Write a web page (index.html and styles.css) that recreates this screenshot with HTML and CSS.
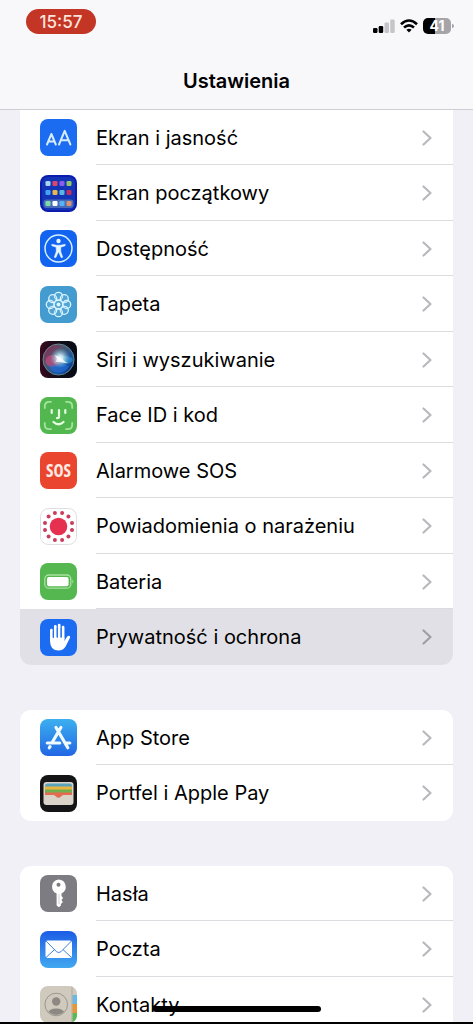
FILE: index.html
```html
<!DOCTYPE html>
<html lang="pl">
<head>
    <meta charset="UTF-8">
    <meta name="viewport" content="width=device-width, initial-scale=1.0">
    <title>Ustawienia</title>
    <link rel="stylesheet" href="styles.css">
</head>
<body>
    <header class="header">
        <div class="status">
            <span class="time">15:57</span>
            <div class="status-icons">
                <svg width="22" height="14" viewBox="0 0 22 14">
                    <rect x="0" y="9" width="4.5" height="5" rx="1.2"/>
                    <rect x="5.7" y="7" width="4.5" height="7" rx="1.2"/>
                    <rect x="11.5" y="3.5" width="4.5" height="10.5" rx="1.2" fill="#c5c4c8"/>
                    <rect x="17.2" y="0.5" width="4.5" height="13.5" rx="1.2" fill="#c5c4c8"/>
                </svg>
                <svg width="18" height="14" viewBox="0 0 18 14">
                    <g fill="none" stroke="#000" stroke-width="2.6">
                        <path d="M1 5.2Q9-2.2 17 5.2"/>
                        <path d="M4 8.5q5-4.4 10 0"/>
                    </g>
                    <path d="M6.4 10.8q2.6-2 5.2 0L9 13.5z"/>
                </svg>
                <div class="battery"><span>41</span></div>
            </div>
        </div>
        <h1>Ustawienia</h1>
    </header>

    <main>
        <nav class="group group-top">
            <a class="row" href="#">
                <svg class="icon" viewBox="0 0 37 37">
                    <rect width="37" height="37" rx="8" fill="#1c6cf2"/>
                    <g fill="none" stroke="#d5ecff" stroke-width="2" stroke-linecap="round" stroke-linejoin="round">
                        <path d="M7 25.5l4.400-10.500 4.400 10.500M8.400 22.400h6"/>
                        <path d="M19 25.500l5.700-13.700 5.700 13.700M20.900 21.300h7.600"/>
                    </g>
                </svg>
                <span class="label">Ekran i jasność</span>
                <svg class="chevron" viewBox="0 0 10 16"><path d="M1.5 1.5L8.5 8l-7 6.5"/></svg>
            </a>
            <a class="row" href="#">
                <svg class="icon" viewBox="0 0 37 37">
                    <rect width="37" height="37" rx="8" fill="#0b1cae"/>
                    <rect x="2" y="2" width="33" height="33" rx="6" fill="#1234b5"/>
                    <rect x="3.5" y="24.5" width="30" height="8.5" rx="3" fill="#4a6cb8"/>
                    <rect x="5.5" y="6" width="5" height="5" rx="1.3" fill="#a9d4f0"/>
                    <rect x="12.5" y="6" width="5" height="5" rx="1.3" fill="#d8486e"/>
                    <rect x="19.5" y="6" width="5" height="5" rx="1.3" fill="#8b5cf0"/>
                    <rect x="26.5" y="6" width="5" height="5" rx="1.3" fill="#91c66b"/>
                    <rect x="5.5" y="15" width="5" height="5" rx="1.3" fill="#43a4f5"/>
                    <rect x="12.5" y="15" width="5" height="5" rx="1.3" fill="#e8b84e"/>
                    <rect x="19.5" y="15" width="5" height="5" rx="1.3" fill="#58b6e0"/>
                    <rect x="26.5" y="15" width="5" height="5" rx="1.3" fill="#c03060"/>
                    <rect x="5.5" y="26" width="5" height="5" rx="1.3" fill="#7fdca4"/>
                    <rect x="12.5" y="26" width="5" height="5" rx="1.3" fill="#fff"/>
                    <rect x="19.5" y="26" width="5" height="5" rx="1.3" fill="#55b4f7"/>
                    <rect x="26.5" y="26" width="5" height="5" rx="1.3" fill="#dc9270"/>
                </svg>
                <span class="label">Ekran początkowy</span>
                <svg class="chevron" viewBox="0 0 10 16"><path d="M1.5 1.5L8.5 8l-7 6.5"/></svg>
            </a>
            <a class="row" href="#">
                <svg class="icon" viewBox="0 0 37 37">
                    <rect width="37" height="37" rx="8" fill="#1263f0"/>
                    <circle cx="18.5" cy="18.5" r="13.5" fill="none" stroke="#d5f2ff" stroke-width="1.5"/>
                    <circle cx="18.5" cy="11" r="2.2" fill="#e6f7ff"/>
                    <path d="M11.8 14.2l4.7 1h4l4.7-1v1.6l-4.4 1.4v4.6l2 5.4-1.6.5-2.7-6-2.7 6-1.6-.5 2-5.4v-4.6l-4.4-1.4z" fill="#e6f7ff" stroke="#e6f7ff" stroke-width=".5" stroke-linejoin="round"/>
                </svg>
                <span class="label">Dostępność</span>
                <svg class="chevron" viewBox="0 0 10 16"><path d="M1.5 1.5L8.5 8l-7 6.5"/></svg>
            </a>
            <a class="row" href="#">
                <svg class="icon" viewBox="0 0 37 37">
                    <rect width="37" height="37" rx="8" fill="#439bd0"/>
                    <g fill="#8cc9e8" fill-opacity=".2" stroke="#d9f5ff" stroke-width="1.3">
                        <circle cx="18.5" cy="10.3" r="4"/>
                        <circle cx="24.3" cy="12.7" r="4"/>
                        <circle cx="26.7" cy="18.5" r="4"/>
                        <circle cx="24.3" cy="24.3" r="4"/>
                        <circle cx="18.5" cy="26.7" r="4"/>
                        <circle cx="12.7" cy="24.3" r="4"/>
                        <circle cx="10.3" cy="18.5" r="4"/>
                        <circle cx="12.7" cy="12.7" r="4"/>
                        <circle cx="18.5" cy="18.5" r="4.5"/>
                    </g>
                    <circle cx="18.5" cy="18.5" r="2" fill="#d9f5ff"/>
                </svg>
                <span class="label">Tapeta</span>
                <svg class="chevron" viewBox="0 0 10 16"><path d="M1.5 1.5L8.5 8l-7 6.5"/></svg>
            </a>
            <a class="row" href="#">
                <svg class="icon" viewBox="0 0 37 37">
                    <defs>
                        <linearGradient id="siri" x1="0" y1="0" x2="1" y2="1">
                            <stop offset="0" stop-color="#a5194c"/>
                            <stop offset=".4" stop-color="#4b5870"/>
                            <stop offset=".7" stop-color="#1854a8"/>
                            <stop offset="1" stop-color="#0a1c58"/>
                        </linearGradient>
                        <radialGradient id="glow">
                            <stop offset="0" stop-color="#fff"/>
                            <stop offset=".3" stop-color="#d8f4ff" stop-opacity=".85"/>
                            <stop offset="1" stop-color="#70c5de" stop-opacity="0"/>
                        </radialGradient>
                        <linearGradient id="siribg">
                            <stop offset="0" stop-color="#38091f"/>
                            <stop offset=".6" stop-color="#0c0d18"/>
                            <stop offset="1" stop-color="#080a15"/>
                        </linearGradient>
                    </defs>
                    <rect width="37" height="37" rx="8" fill="url(#siribg)"/>
                    <circle cx="18.5" cy="18.5" r="15.5" fill="url(#siri)" stroke="#5d8a90" stroke-width="1"/>
                    <ellipse cx="12.5" cy="20" rx="7" ry="6" fill="#e0477f" opacity=".6"/>
                    <path d="M19 18c5-5 12-3 14 1-3 5-9 5-14-1z" fill="#3aa4d8" opacity=".5"/>
                    <path d="M9 25c7-1 13-3 20 0-3 8-16 10-20 0z" fill="#2372dd" opacity=".6"/>
                    <circle cx="20" cy="17" r="10" fill="url(#glow)"/>
                    <path d="M14 14q5 1 8 4t6 4q-5 0-8-1t-6 1q3-2 3-4t-3-4z" fill="#fff" opacity=".8"/>
                </svg>
                <span class="label">Siri i wyszukiwanie</span>
                <svg class="chevron" viewBox="0 0 10 16"><path d="M1.5 1.5L8.5 8l-7 6.5"/></svg>
            </a>
            <a class="row" href="#">
                <svg class="icon" viewBox="0 0 37 37">
                    <rect width="37" height="37" rx="8" fill="#51b74e"/>
                    <g fill="none" stroke-linecap="round">
                        <path d="M4.8 11V9.3q0-4.5 4.5-4.5H11M26 4.8h1.700q4.500 0 4.500 4.500V11M32.200 26v1.700q0 4.500-4.500 4.500H26M11 32.200H9.300q-4.500 0-4.500-4.500V26" stroke="#a2e49c" stroke-width="1.8"/>
                        <path d="M11.700 13v3M25.300 13v3M19 13v6.800q0 1.400-2 1.300M13.500 25q5 4.500 10 0" stroke="#e4ffe2" stroke-width="2.2"/>
                    </g>
                </svg>
                <span class="label">Face ID i kod</span>
                <svg class="chevron" viewBox="0 0 10 16"><path d="M1.5 1.5L8.5 8l-7 6.5"/></svg>
            </a>
            <a class="row" href="#">
                <span class="icon sos">SOS</span>
                <span class="label">Alarmowe SOS</span>
                <svg class="chevron" viewBox="0 0 10 16"><path d="M1.5 1.5L8.5 8l-7 6.5"/></svg>
            </a>
            <a class="row" href="#">
                <svg class="icon" viewBox="0 0 37 37">
                    <rect x=".5" y=".5" width="36" height="36" rx="8" fill="#fff" stroke="#dedde1"/>
                    <circle cx="18.5" cy="18.5" r="8.8" fill="#e5314f"/>
                    <g fill="#c93c5c">
                        <circle cx="22.1" cy="5" r="2"/>
                        <circle cx="28.4" cy="8.6" r="2"/>
                        <circle cx="32" cy="14.9" r="2"/>
                        <circle cx="32" cy="22.1" r="2"/>
                        <circle cx="28.4" cy="28.4" r="2"/>
                        <circle cx="22.1" cy="32" r="2"/>
                        <circle cx="14.9" cy="32" r="2"/>
                        <circle cx="8.6" cy="28.4" r="2"/>
                        <circle cx="5" cy="22.1" r="2"/>
                        <circle cx="5" cy="14.9" r="2"/>
                        <circle cx="8.6" cy="8.6" r="2"/>
                        <circle cx="14.9" cy="5" r="2"/>
                    </g>
                </svg>
                <span class="label">Powiadomienia o narażeniu</span>
                <svg class="chevron" viewBox="0 0 10 16"><path d="M1.5 1.5L8.5 8l-7 6.5"/></svg>
            </a>
            <a class="row" href="#">
                <svg class="icon" viewBox="0 0 37 37">
                    <rect width="37" height="37" rx="8" fill="#54b74f"/>
                    <rect x="4.8" y="12" width="26" height="13.2" rx="4" fill="none" stroke="#a8e2a2" stroke-width="1.3"/>
                    <rect x="7" y="14" width="21.6" height="9.2" rx="2" fill="#fff"/>
                    <path d="M32.3 16.5q2.2 2 0 4.2z" fill="#a8e2a2"/>
                </svg>
                <span class="label">Bateria</span>
                <svg class="chevron" viewBox="0 0 10 16"><path d="M1.5 1.5L8.5 8l-7 6.5"/></svg>
            </a>
            <a class="row active" href="#">
                <svg class="icon" viewBox="0 0 37 37">
                    <rect width="37" height="37" rx="8" fill="#1c6cf2"/>
                    <g stroke="#fff" stroke-width="2.7" stroke-linecap="round">
                        <path d="M11.4 11.2V22M15.3 7.3V20M19.2 6V20M23.1 8.2V20"/>
                    </g>
                    <path d="M10.1 18.5h14.3v3.4l2.8-4.3q1.2-1.4 2.4-.7.9.6.3 2.1l-4.2 8.3q-2.2 4.2-7.2 4.2-8.4 0-8.4-9.2z" fill="#fff"/>
                    <path d="M13.3 12v7M17.25 9v9.5M21.15 9v9.5" stroke="#1c6cf2" stroke-width=".9"/>
                </svg>
                <span class="label">Prywatność i ochrona</span>
                <svg class="chevron" viewBox="0 0 10 16"><path d="M1.5 1.5L8.5 8l-7 6.5"/></svg>
            </a>
        </nav>

        <nav class="group">
            <a class="row" href="#">
                <svg class="icon" viewBox="0 0 37 37">
                    <defs>
                        <linearGradient id="store" x1="0" y1="0" x2="0" y2="1">
                            <stop offset="0" stop-color="#3cafef"/>
                            <stop offset="1" stop-color="#2166e4"/>
                        </linearGradient>
                    </defs>
                    <rect width="37" height="37" rx="8" fill="url(#store)"/>
                    <g stroke="#eefaff" stroke-width="3.2" stroke-linecap="round">
                        <path d="M20.900 8.500L12 23.800M16 8.500L27.800 28.700M7.300 24h12.400M25.500 24h4.300M10 27.600l-.7 1.200"/>
                    </g>
                </svg>
                <span class="label">App Store</span>
                <svg class="chevron" viewBox="0 0 10 16"><path d="M1.5 1.5L8.5 8l-7 6.5"/></svg>
            </a>
            <a class="row" href="#">
                <svg class="icon" viewBox="0 0 37 37">
                    <rect width="37" height="37" rx="8" fill="#141416"/>
                    <rect x="3.5" y="7" width="30" height="23" rx="3" fill="#d9d3c9"/>
                    <path d="M5 11q0-2.5 2.5-2.5h22q2.5 0 2.5 2.5v2H5z" fill="#5aa3bd"/>
                    <path d="M5 11.5h27v4H5z" fill="#e8b53e"/>
                    <path d="M5 14.5h27v4H5z" fill="#72ae50"/>
                    <path d="M5 17.500h27v2.500h-8.500q-1.500 0-2.500 1.500-2.500 2.700-5 0-1-1.500-2.500-1.500H5z" fill="#e56b50"/>
                </svg>
                <span class="label">Portfel i Apple Pay</span>
                <svg class="chevron" viewBox="0 0 10 16"><path d="M1.5 1.5L8.5 8l-7 6.5"/></svg>
            </a>
        </nav>

        <nav class="group">
            <a class="row" href="#">
                <svg class="icon" viewBox="0 0 37 37">
                    <rect width="37" height="37" rx="8" fill="#7d7c82"/>
                    <path d="M18.5 4.5a7.3 7.3 0 0 1 3 13.9v2.6l1.6 2-1.7 2 1.5 1.9-2 2.2v1.3l-1.9 1.8-2.4-1.8V18.500a7.300 7.300 0 0 1 1.900-14z" fill="#fff"/>
                    <circle cx="18.5" cy="9.8" r="2" fill="#7d7c82"/>
                    <path d="M19 19v10" stroke="#bbb" stroke-width=".7"/>
                </svg>
                <span class="label">Hasła</span>
                <svg class="chevron" viewBox="0 0 10 16"><path d="M1.5 1.5L8.5 8l-7 6.5"/></svg>
            </a>
            <a class="row" href="#">
                <svg class="icon" viewBox="0 0 37 37">
                    <defs>
                        <linearGradient id="mail" x1="0" y1="0" x2="0" y2="1">
                            <stop offset="0" stop-color="#1d5de6"/>
                            <stop offset="1" stop-color="#41a8f0"/>
                        </linearGradient>
                    </defs>
                    <rect width="37" height="37" rx="8" fill="url(#mail)"/>
                    <rect x="5.5" y="9.5" width="26.5" height="17.5" rx="2.2" fill="#fff"/>
                    <path d="M6.2 10.2l10.3 10.5q2.2 1.7 4.4 0L31.3 10.2M6.2 26.3l8.3-7.7M31.3 26.3L23 18.6" fill="none" stroke="#3b83dc" stroke-width="1"/>
                </svg>
                <span class="label">Poczta</span>
                <svg class="chevron" viewBox="0 0 10 16"><path d="M1.5 1.5L8.5 8l-7 6.5"/></svg>
            </a>
            <a class="row" href="#">
                <svg class="icon" viewBox="0 0 37 37">
                    <clipPath id="card"><rect width="37" height="37" rx="8"/></clipPath>
                    <clipPath id="face"><circle cx="16.2" cy="18.5" r="10.5"/></clipPath>
                    <g clip-path="url(#card)">
                        <path d="M0 0h37v37H0z" fill="#cfcabd"/>
                        <path d="M32.5 9H37v9h-4.5z" fill="#69b8e8"/>
                        <path d="M32.5 18H37v9h-4.5z" fill="#ec9432"/>
                        <path d="M32.5 27H37v10h-4.5z" fill="#58b957"/>
                        <path d="M32 0v37" stroke="#a8a397" stroke-width=".8"/>
                    </g>
                    <circle cx="16.2" cy="18.5" r="11.3" fill="none" stroke="#9b968d" stroke-width="1"/>
                    <g clip-path="url(#face)" fill="#8d8982">
                        <circle cx="16.2" cy="15.5" r="4.2"/>
                        <ellipse cx="16.2" cy="27.5" rx="8.5" ry="5"/>
                    </g>
                </svg>
                <span class="label">Kontakty</span>
                <svg class="chevron" viewBox="0 0 10 16"><path d="M1.5 1.5L8.5 8l-7 6.5"/></svg>
            </a>
        </nav>
    </main>
    <div class="home-bar"></div>
</body>
</html>
```

FILE: styles.css
```css
* {
    box-sizing: border-box;
}
body {
    display: flex;
    flex-direction: column;
    margin: 0;
    height: 100vh;
    overflow: hidden;
    font-family: Inter, 'Liberation Sans', sans-serif;
    color: #000;
    background-color: #f0f0f6;
}
.header {
    flex: none;
    padding: 9px 0 15px;
    background-color: #f8f7fa;
    border-bottom: 1px solid #cfced3;
}
main {
    flex: 1;
    min-height: 0;
    overflow: hidden;
}
.status {
    display: flex;
    justify-content: space-between;
    padding: 0 22px 0 26px;
}
.time {
    width: 70px;
    height: 25px;
    border-radius: 13px;
    background-color: #c33524;
    color: #ffe4de;
    font-size: 17px;
    font-weight: 500;
    line-height: 26px;
    text-align: center;
}
.status-icons {
    display: flex;
    align-items: center;
    gap: 5px;
    padding-top: 8px;
    height: 26px;
}
.battery {
    position: relative;
    width: 28px;
    height: 16px;
    border-radius: 5px;
    background: linear-gradient(to right, #000 42%, #a5a4a8 42%);
    color: #fff;
    font-size: 14px;
    font-weight: 700;
    line-height: 16px;
    text-align: center;
}
.battery::after {
    content: "";
    position: absolute;
    right: -3px;
    top: 6px;
    width: 2px;
    height: 4px;
    border-radius: 0 2px 2px 0;
    background-color: #a5a4a8;
}
h1 {
    margin: 33px 0 0;
    font-size: 20px;
    font-weight: 600;
    line-height: 26px;
    text-align: center;
}
.group {
    margin: 0 20px 45px;
    border-radius: 11px;
    background-color: #fff;
    overflow: hidden;
}
.group-top {
    border-top-left-radius: 0;
    border-top-right-radius: 0;
}
.row {
    display: flex;
    align-items: center;
    height: 55px;
    padding-left: 20px;
    color: #000;
    text-decoration: none;
    font-size: 20px;
    background: linear-gradient(#dcdce0, #dcdce0) 76px 100% / 100% 1px no-repeat;
}
.row:nth-child(even) {
    height: 56px;
}
.row:last-child {
    background: none;
}
.row.active {
    background: #e1e0e6;
}
.icon {
    flex: none;
    width: 37px;
    height: 37px;
    margin-right: 19px;
}
.sos {
    border-radius: 8px;
    background-color: #ea462f;
    color: #ffeae4;
    font-family: 'Open Sans', sans-serif;
    font-stretch: condensed;
    font-size: 17px;
    font-weight: 700;
    line-height: 37px;
    text-align: center;
}
.label {
    flex: 1;
    white-space: nowrap;
}
.chevron {
    width: 10px;
    height: 16px;
    margin-right: 21px;
    fill: none;
    stroke: #b9b8bd;
    stroke-width: 2.2;
    stroke-linecap: round;
    stroke-linejoin: round;
}
.active .chevron {
    stroke: #9f9ea4;
}
.home-bar {
    position: fixed;
    left: 0;
    right: 0;
    bottom: 0;
    height: 18px;
    border-bottom: 2px solid #000;
}
.home-bar::before {
    content: "";
    display: block;
    width: 168px;
    height: 6px;
    margin: 0 auto;
    border-radius: 3px;
    background-color: #000;
}
```
